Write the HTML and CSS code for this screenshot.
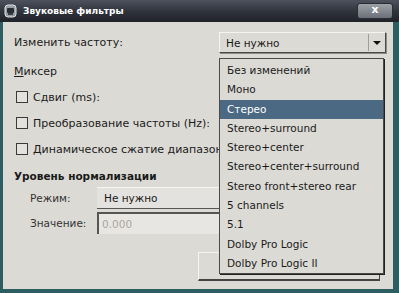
FILE: index.html
```html
<!DOCTYPE html>
<html lang="ru">
<head>
    <meta charset="UTF-8">
    <title>Звуковые фильтры</title>
    <link rel="stylesheet" href="styles.css">
</head>
<body>

<div class="window">
    <div class="titlebar">
        <svg class="app-icon" width="13" height="14" viewBox="0 0 13 14">
            <rect x="1" y="1" width="11" height="12" rx="3" fill="#9a9ea4" stroke="#dfe1e4" stroke-width="1"/>
            <rect x="3" y="4" width="7" height="5" rx="1" fill="#2a2d33"/>
            <rect x="4" y="9" width="5" height="2" fill="#3a3d43"/>
        </svg>
        <span class="title">Звуковые фильтры</span>
        <div class="close-btn">x</div>
    </div>

    <div class="body">
        <div class="row row-first">
            <span class="label">Изменить частоту:</span>
            <div class="combo">
                <span>Не нужно</span>
                <span class="combo-arrow"></span>
            </div>
        </div>

        <div class="row row-mixer"><span><u>М</u>иксер</span></div>

        <div class="row row-check"><span class="check"></span>Сдвиг (ms):</div>
        <div class="row row-check"><span class="check"></span>Преобразование частоты (Hz):</div>
        <div class="row row-check"><span class="check"></span>Динамическое сжатие диапазона</div>

        <div class="row section-title">Уровень нормализации</div>

        <div class="row row-field">
            <span class="field-label">Режим:</span>
            <div class="field-combo">Не нужно</div>
        </div>
        <div class="row row-field row-value">
            <span class="field-label">Значение:</span>
            <div class="field-input">0.000</div>
        </div>

        <div class="row row-buttons">
            <div class="button"></div>
        </div>
    </div>

    <ul class="popup">
        <li>Без изменений</li>
        <li>Моно</li>
        <li class="selected">Стерео</li>
        <li>Stereo+surround</li>
        <li>Stereo+center</li>
        <li>Stereo+center+surround</li>
        <li>Stereo front+stereo rear</li>
        <li>5 channels</li>
        <li>5.1</li>
        <li>Dolby Pro Logic</li>
        <li>Dolby Pro Logic II</li>
    </ul>
</div>

</body>
</html>
```

FILE: styles.css
```css
body {
    margin: 0;
    font-family: "DejaVu Sans", sans-serif;
    font-size: 10.5px;
    color: #1a1a1a;
    background: #dcdad5;
}

.window {
    position: relative;
    width: 399px;
    height: 293px;
    overflow: hidden;
}

.titlebar {
    height: 22px;
    display: flex;
    align-items: center;
    background: linear-gradient(#4d525d, #2e323a 55%, #1f2228);
    padding-left: 4px;
}

.app-icon {
    margin-right: 6px;
}

.title {
    color: #ffffff;
    font-weight: bold;
    font-size: 9px;
}

.close-btn {
    margin-left: auto;
    margin-right: 6px;
    width: 34px;
    height: 14px;
    border: 1px solid #2a2d33;
    border-radius: 3px;
    background: linear-gradient(#9ca0a7, #6b7078);
    color: #ffffff;
    font-weight: bold;
    font-size: 11px;
    line-height: 12px;
    text-align: center;
}

.body {
    height: 271px;
    box-sizing: border-box;
    border-left: 3px solid #2c5d60;
    border-right: 6px solid #2c5d60;
    border-bottom: 4px solid #2c5d60;
    padding: 9px 0 0 11px;
    background: #dcdad5;
}

.row {
    display: flex;
    align-items: center;
}

.row-first {
    height: 23px;
}

.label {
    width: 205px;
    font-size: 11px;
}

.combo {
    height: 21px;
    display: flex;
    align-items: center;
    padding-left: 6px;
    box-sizing: border-box;
    width: 167px;
    border: 1px solid #f5f4f2;
    border-right-color: #4a4a4a;
    border-bottom-color: #4a4a4a;
    box-shadow: 1px 1px 0 #8c8a86;
    background: #dcdad5;
}

.combo-arrow {
    margin-left: auto;
    margin-right: 1px;
    width: 15px;
    height: 17px;
    border-left: 1px solid #a09e99;
    position: relative;
}

.combo-arrow::after {
    content: "";
    position: absolute;
    left: 4px;
    top: 7px;
    border-left: 4px solid transparent;
    border-right: 4px solid transparent;
    border-top: 4px solid #111;
}

.row-mixer {
    height: 18px;
    margin-top: 8px;
    font-size: 11px;
}

.row-mixer u {
    text-decoration-thickness: 1px;
}

.row-check {
    height: 26px;
    padding-left: 2px;
    font-size: 11px;
}

.row-mixer + .row-check {
    margin-top: 4px;
}

.check {
    width: 10px;
    height: 10px;
    border: 1px solid #3a3a3a;
    background: #e4e2de;
    margin-right: 5px;
}

.section-title {
    height: 18px;
    margin-top: 5px;
    font-weight: bold;
}

.row-field {
    height: 22px;
    margin-top: 2px;
    padding-left: 16px;
}

.row-value {
    margin-top: 3px;
}

.field-label {
    width: 67px;
    color: #333;
}

.field-combo {
    width: 270px;
    height: 22px;
    box-sizing: border-box;
    padding-left: 7px;
    display: flex;
    align-items: center;
    background: #e4e2de;
    border-top: 1px solid #f7f6f4;
    border-bottom: 1px solid #555;
}

.field-input {
    width: 270px;
    height: 22px;
    box-sizing: border-box;
    padding-left: 3px;
    display: flex;
    align-items: center;
    color: #a8a6a2;
    background: #e8e6e2;
    border-top: 2px solid #555;
    border-left: 2px solid #555;
}

.row-buttons {
    margin-top: 18px;
    padding-left: 184px;
}

.button {
    width: 180px;
    height: 26px;
    border: 1px solid #f5f4f2;
    border-right-color: #444;
    border-bottom: 2px solid #444;
    background: #dcdad5;
}

.popup {
    position: absolute;
    left: 219px;
    top: 58px;
    width: 165px;
    height: 216px;
    margin: 0;
    padding: 2px 0 0 0;
    box-sizing: border-box;
    list-style: none;
    background: #dcdad5;
    border: 1px solid #4a4a4a;
    box-shadow: 1px 1px 0 #222;
}

.popup li {
    height: 19.3px;
    line-height: 19.3px;
    padding-left: 7px;
    color: #1a1a1a;
}

.popup li.selected {
    background: #4b6983;
    color: #ffffff;
}
```
